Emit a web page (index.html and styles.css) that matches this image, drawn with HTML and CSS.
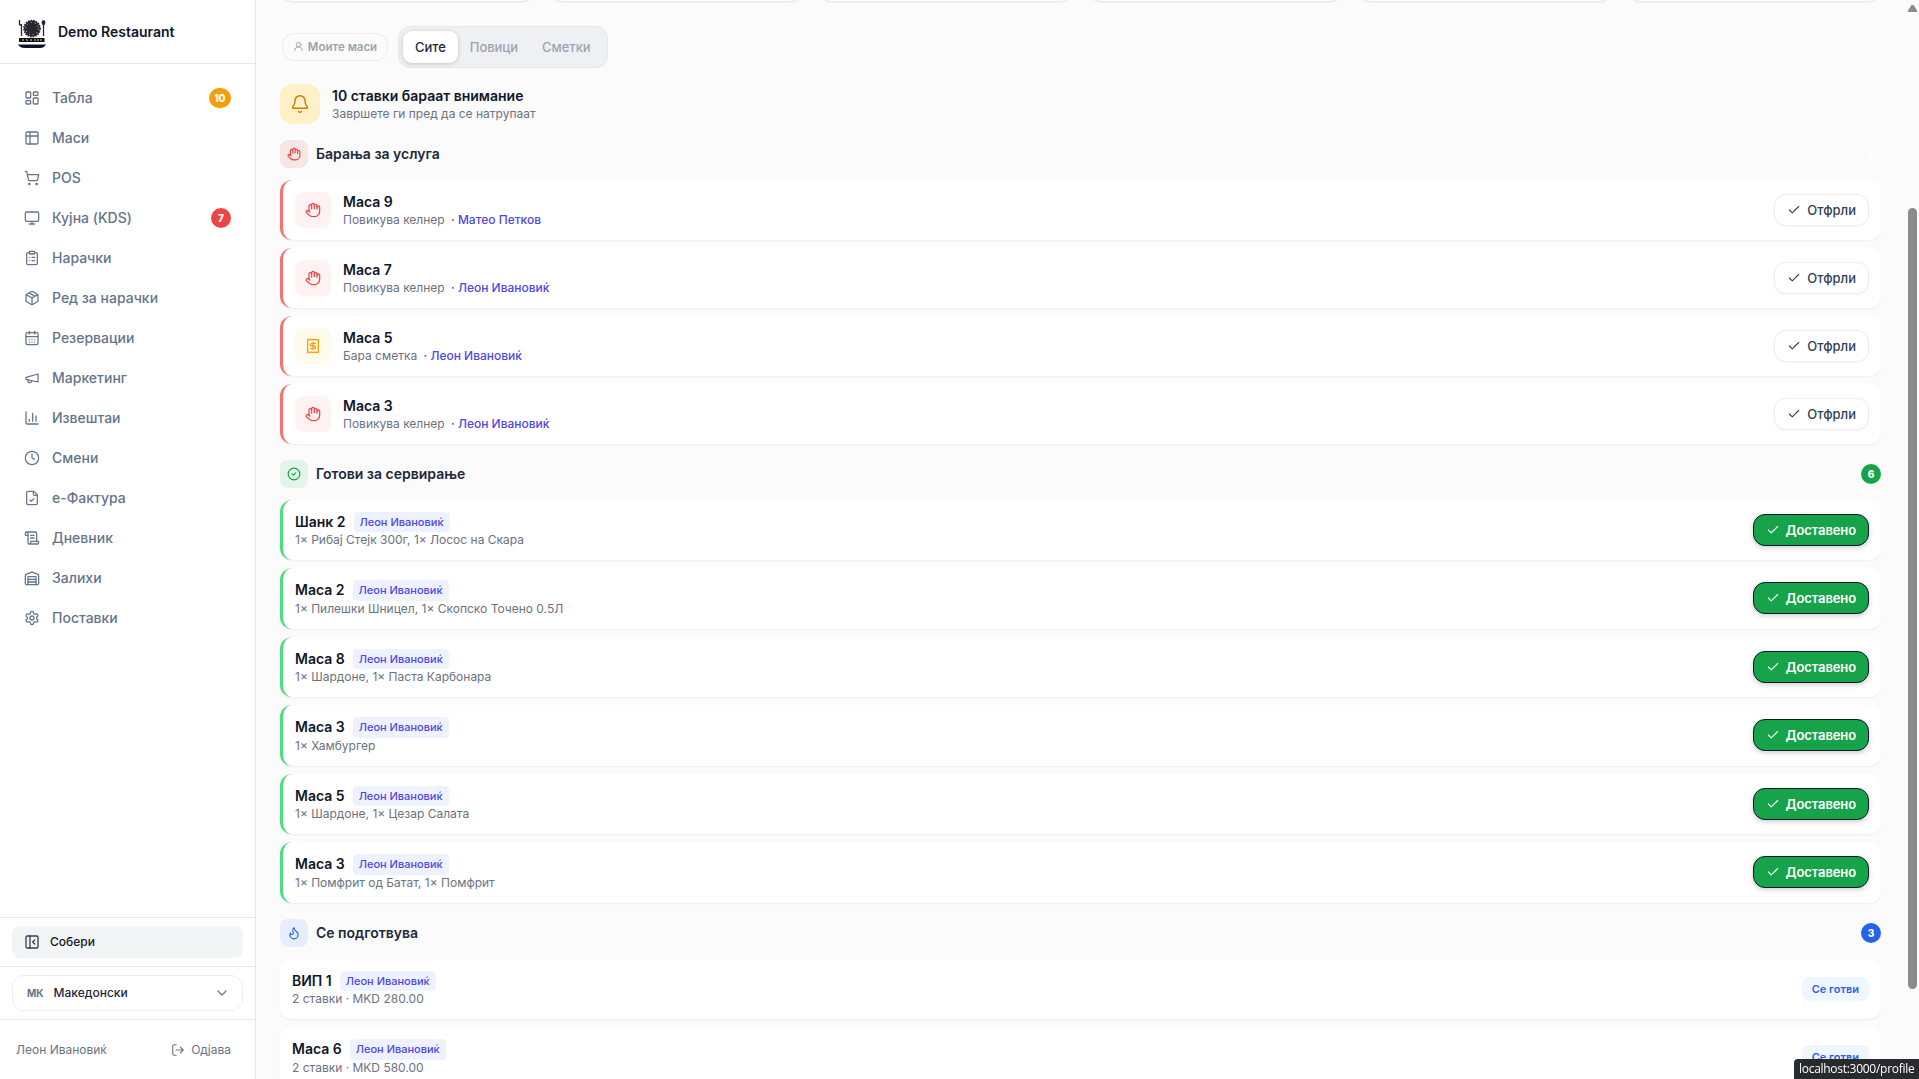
FILE: index.html
```html
<!DOCTYPE html>
<html lang="mk">
<head>
<meta charset="utf-8">
<title>Demo Restaurant</title>
<link rel="stylesheet" href="styles.css">
</head>
<body>
<svg class="sprite" aria-hidden="true">
  <symbol id="i-dash" viewBox="0 0 24 24"><rect x="3" y="3" width="7" height="9" rx="1"/><rect x="14" y="3" width="7" height="5" rx="1"/><rect x="14" y="12" width="7" height="9" rx="1"/><rect x="3" y="16" width="7" height="5" rx="1"/></symbol>
  <symbol id="i-table" viewBox="0 0 24 24"><rect x="3" y="3" width="18" height="18" rx="2"/><path d="M3 9h18M9 3v18"/></symbol>
  <symbol id="i-cart" viewBox="0 0 24 24"><circle cx="8" cy="21" r="1"/><circle cx="19" cy="21" r="1"/><path d="M2.05 2.05h2l2.66 12.42a2 2 0 0 0 2 1.58h9.78a2 2 0 0 0 1.95-1.57l1.65-7.43H5.12"/></symbol>
  <symbol id="i-monitor" viewBox="0 0 24 24"><rect x="2" y="3" width="20" height="14" rx="2"/><path d="M8 21h8M12 17v4"/></symbol>
  <symbol id="i-clip" viewBox="0 0 24 24"><rect x="8" y="2" width="8" height="4" rx="1"/><path d="M16 4h2a2 2 0 0 1 2 2v14a2 2 0 0 1-2 2H6a2 2 0 0 1-2-2V6a2 2 0 0 1 2-2h2M12 11h4M12 16h4M8 11h.01M8 16h.01"/></symbol>
  <symbol id="i-box" viewBox="0 0 24 24"><path d="M11 21.73a2 2 0 0 0 2 0l7-4A2 2 0 0 0 21 16V8a2 2 0 0 0-1-1.73l-7-4a2 2 0 0 0-2 0l-7 4A2 2 0 0 0 3 8v8a2 2 0 0 0 1 1.73zM12 22V12M3.29 7 12 12l8.71-5M7.5 4.27l9 5.15"/></symbol>
  <symbol id="i-cal" viewBox="0 0 24 24"><path d="M8 2v4M16 2v4M3 10h18M8 14h.01M12 14h.01M16 14h.01M8 18h.01M12 18h.01M16 18h.01"/><rect x="3" y="4" width="18" height="18" rx="2"/></symbol>
  <symbol id="i-mega" viewBox="0 0 24 24"><path d="m3 11 18-5v12L3 14v-3zM11.6 16.8a3 3 0 1 1-5.8-1.6"/></symbol>
  <symbol id="i-chart" viewBox="0 0 24 24"><path d="M3 3v16a2 2 0 0 0 2 2h16M18 17V9M13 17V5M8 17v-3"/></symbol>
  <symbol id="i-clock" viewBox="0 0 24 24"><circle cx="12" cy="12" r="10"/><path d="M12 6v6l4 2"/></symbol>
  <symbol id="i-file" viewBox="0 0 24 24"><path d="M15 2H6a2 2 0 0 0-2 2v16a2 2 0 0 0 2 2h12a2 2 0 0 0 2-2V7zM14 2v4a2 2 0 0 0 2 2h4M9 15l2 2 4-4"/></symbol>
  <symbol id="i-scroll" viewBox="0 0 24 24"><path d="M15 12h-5M15 8h-5M19 17V5a2 2 0 0 0-2-2H4M8 21h12a2 2 0 0 0 2-2v-1a1 1 0 0 0-1-1H11a1 1 0 0 0-1 1v1a2 2 0 1 1-4 0V5a2 2 0 1 0-4 0v2a1 1 0 0 0 1 1h3"/></symbol>
  <symbol id="i-ware" viewBox="0 0 24 24"><path d="M22 8.35V20a2 2 0 0 1-2 2H4a2 2 0 0 1-2-2V8.35A2 2 0 0 1 3.26 6.5l8-3.2a2 2 0 0 1 1.48 0l8 3.2A2 2 0 0 1 22 8.35ZM6 18h12M6 14h12"/><path d="M6 22V11a1 1 0 0 1 1-1h10a1 1 0 0 1 1 1v11"/></symbol>
  <symbol id="i-gear" viewBox="0 0 24 24"><path d="M12.22 2h-.44a2 2 0 0 0-2 2v.18a2 2 0 0 1-1 1.73l-.43.25a2 2 0 0 1-2 0l-.15-.08a2 2 0 0 0-2.73.73l-.22.38a2 2 0 0 0 .73 2.73l.15.1a2 2 0 0 1 1 1.72v.51a2 2 0 0 1-1 1.74l-.15.09a2 2 0 0 0-.73 2.73l.22.38a2 2 0 0 0 2.73.73l.15-.08a2 2 0 0 1 2 0l.43.25a2 2 0 0 1 1 1.73V20a2 2 0 0 0 2 2h.44a2 2 0 0 0 2-2v-.18a2 2 0 0 1 1-1.73l.43-.25a2 2 0 0 1 2 0l.15.08a2 2 0 0 0 2.73-.73l.22-.39a2 2 0 0 0-.73-2.73l-.15-.08a2 2 0 0 1-1-1.74v-.5a2 2 0 0 1 1-1.74l.15-.09a2 2 0 0 0 .73-2.73l-.22-.38a2 2 0 0 0-2.73-.73l-.15.08a2 2 0 0 1-2 0l-.43-.25a2 2 0 0 1-1-1.73V4a2 2 0 0 0-2-2z"/><circle cx="12" cy="12" r="3"/></symbol>
  <symbol id="i-collapse" viewBox="0 0 24 24"><rect x="3" y="3" width="18" height="18" rx="2"/><path d="M9 3v18M16 15l-3-3 3-3"/></symbol>
  <symbol id="i-down" viewBox="0 0 24 24"><path d="m6 9 6 6 6-6"/></symbol>
  <symbol id="i-logout" viewBox="0 0 24 24"><path d="M9 21H5a2 2 0 0 1-2-2V5a2 2 0 0 1 2-2h4M16 17l5-5-5-5M21 12H9"/></symbol>
  <symbol id="i-user" viewBox="0 0 24 24"><circle cx="12" cy="8" r="5"/><path d="M20 21a8 8 0 0 0-16 0"/></symbol>
  <symbol id="i-bell" viewBox="0 0 24 24"><path d="M10.27 21a2 2 0 0 0 3.46 0M3.26 15.33A1 1 0 0 0 4 17h16a1 1 0 0 0 .74-1.67C19.41 13.96 18 12.5 18 8A6 6 0 0 0 6 8c0 4.5-1.41 5.96-2.74 7.33"/></symbol>
  <symbol id="i-hand" viewBox="0 0 24 24"><path d="M18 11V6a2 2 0 0 0-4 0M14 10V4a2 2 0 0 0-4 0v2M10 10.5V6a2 2 0 0 0-4 0v8"/><path d="M18 8a2 2 0 1 1 4 0v6a8 8 0 0 1-8 8h-2c-2.8 0-4.5-.86-5.99-2.34l-3.6-3.6a2 2 0 0 1 2.83-2.82L7 15"/></symbol>
  <symbol id="i-receipt" viewBox="0 0 24 24"><path d="M4 2v20l2-1 2 1 2-1 2 1 2-1 2 1 2-1 2 1V2l-2 1-2-1-2 1-2-1-2 1-2-1-2 1Z"/><path d="M16 8h-6a2 2 0 1 0 0 4h4a2 2 0 1 1 0 4H8M12 17.5v-11"/></symbol>
  <symbol id="i-okc" viewBox="0 0 24 24"><circle cx="12" cy="12" r="10"/><path d="m9 12 2 2 4-4"/></symbol>
  <symbol id="i-flame" viewBox="0 0 24 24"><path d="M8.5 14.5A2.5 2.5 0 0 0 11 12c0-1.38-.5-2-1-3-1.07-2.14-.22-4.05 2-6 .5 2.5 2 4.9 4 6.5s3 3.5 3 5.5a7 7 0 1 1-14 0c0-1.15.43-2.29 1-3a2.5 2.5 0 0 0 2.5 2.5"/></symbol>
  <symbol id="i-check" viewBox="0 0 24 24"><path d="M20 6 9 17l-5-5"/></symbol>
</svg>

<div class="app">
  <aside class="sidebar">
    <div class="brand">
      <svg class="logo" viewBox="0 0 28 30">
        <circle cx="14" cy="9.6" r="8" fill="#26272f"/>
        <circle cx="14" cy="9.6" r="8.1" fill="none" stroke="#26272f" stroke-width="1.5" stroke-dasharray="1.6 1"/>
        <circle cx="14" cy="9.6" r="6.2" fill="none" stroke="#fff" stroke-width=".8" stroke-dasharray=".9 3"/>
        <path d="M1.5 1v5M3.5 5v12M1.5 6h2M25.5 4v13" fill="none" stroke="#26272f" stroke-width="1.3"/>
        <ellipse cx="25.5" cy="3.6" rx="1.9" ry="2.6" fill="#26272f"/>
        <path d="M1 19h25.500v4H1z" fill="#111"/>
        <path d="M5 20v2M8 20.500l2 1M13 20v2M16 21h2M20 20v2M23 20v2" stroke="#fff" stroke-width=".8"/>
        <path d="M0 25.500h28q-2 3.500-6 3.500H7q-5 0-7-3.500z" fill="#0d1424"/>
      </svg>
      <span>Demo Restaurant</span>
    </div>
    <nav class="nav">
      <a><svg class="ic"><use href="#i-dash"/></svg><span>Табла</span><b class="pill amber">10</b></a>
      <a><svg class="ic"><use href="#i-table"/></svg><span>Маси</span></a>
      <a><svg class="ic"><use href="#i-cart"/></svg><span>POS</span></a>
      <a><svg class="ic"><use href="#i-monitor"/></svg><span>Кујна (KDS)</span><b class="pill red">7</b></a>
      <a><svg class="ic"><use href="#i-clip"/></svg><span>Нарачки</span></a>
      <a><svg class="ic"><use href="#i-box"/></svg><span>Ред за нарачки</span></a>
      <a><svg class="ic"><use href="#i-cal"/></svg><span>Резервации</span></a>
      <a><svg class="ic"><use href="#i-mega"/></svg><span>Маркетинг</span></a>
      <a><svg class="ic"><use href="#i-chart"/></svg><span>Извештаи</span></a>
      <a><svg class="ic"><use href="#i-clock"/></svg><span>Смени</span></a>
      <a><svg class="ic"><use href="#i-file"/></svg><span>е-Фактура</span></a>
      <a><svg class="ic"><use href="#i-scroll"/></svg><span>Дневник</span></a>
      <a><svg class="ic"><use href="#i-ware"/></svg><span>Залихи</span></a>
      <a><svg class="ic"><use href="#i-gear"/></svg><span>Поставки</span></a>
    </nav>
    <div class="side-block collapse"><button class="collapse-btn"><svg class="ic"><use href="#i-collapse"/></svg><span>Собери</span></button></div>
    <div class="side-block lang"><button class="lang-btn"><b>МК</b><span>Македонски</span><svg class="ic"><use href="#i-down"/></svg></button></div>
    <div class="side-block user"><span>Леон Ивановиќ</span><a class="logout"><svg class="ic"><use href="#i-logout"/></svg><span>Одјава</span></a></div>
  </aside>

  <main class="main">
    <div class="stats"><i></i><i></i><i></i><i></i><i></i><i></i></div>
    <div class="filters">
      <button class="mine"><svg class="ic"><use href="#i-user"/></svg><span>Моите маси</span></button>
      <div class="tabs"><button class="tab on">Сите</button><button class="tab">Повици</button><button class="tab">Сметки</button></div>
    </div>
    <div class="alert">
      <div class="alert-ic"><svg class="ic"><use href="#i-bell"/></svg></div>
      <div><div class="title">10 ставки бараат внимание</div><div class="sub">Завршете ги пред да се натрупаат</div></div>
    </div>

    <section>
      <h2 class="head h-red"><span class="head-ic"><svg class="ic"><use href="#i-hand"/></svg></span><span>Барања за услуга</span><b class="count">4</b></h2>
      <div class="list">
        <div class="card c-red"><div class="box"><svg class="ic"><use href="#i-hand"/></svg></div><div class="info"><div class="title">Маса 9</div><div class="sub">Повикува келнер <em>· Матео Петков</em></div></div><button class="btn"><svg class="ic"><use href="#i-check"/></svg>Отфрли</button></div>
        <div class="card c-red"><div class="box"><svg class="ic"><use href="#i-hand"/></svg></div><div class="info"><div class="title">Маса 7</div><div class="sub">Повикува келнер <em>· Леон Ивановиќ</em></div></div><button class="btn"><svg class="ic"><use href="#i-check"/></svg>Отфрли</button></div>
        <div class="card c-red"><div class="box bill"><svg class="ic"><use href="#i-receipt"/></svg></div><div class="info"><div class="title">Маса 5</div><div class="sub">Бара сметка <em>· Леон Ивановиќ</em></div></div><button class="btn"><svg class="ic"><use href="#i-check"/></svg>Отфрли</button></div>
        <div class="card c-red"><div class="box"><svg class="ic"><use href="#i-hand"/></svg></div><div class="info"><div class="title">Маса 3</div><div class="sub">Повикува келнер <em>· Леон Ивановиќ</em></div></div><button class="btn"><svg class="ic"><use href="#i-check"/></svg>Отфрли</button></div>
      </div>
    </section>

    <section>
      <h2 class="head h-green"><span class="head-ic"><svg class="ic"><use href="#i-okc"/></svg></span><span>Готови за сервирање</span><b class="count">6</b></h2>
      <div class="list">
        <div class="card c-green"><div class="info"><div class="row"><span class="title">Шанк 2</span><span class="tag">Леон Ивановиќ</span></div><div class="sub">1× Рибај Стејк 300г, 1× Лосос на Скара</div></div><button class="btn go"><svg class="ic"><use href="#i-check"/></svg>Доставено</button></div>
        <div class="card c-green"><div class="info"><div class="row"><span class="title">Маса 2</span><span class="tag">Леон Ивановиќ</span></div><div class="sub">1× Пилешки Шницел, 1× Скопско Точено 0.5Л</div></div><button class="btn go"><svg class="ic"><use href="#i-check"/></svg>Доставено</button></div>
        <div class="card c-green"><div class="info"><div class="row"><span class="title">Маса 8</span><span class="tag">Леон Ивановиќ</span></div><div class="sub">1× Шардоне, 1× Паста Карбонара</div></div><button class="btn go"><svg class="ic"><use href="#i-check"/></svg>Доставено</button></div>
        <div class="card c-green"><div class="info"><div class="row"><span class="title">Маса 3</span><span class="tag">Леон Ивановиќ</span></div><div class="sub">1× Хамбургер</div></div><button class="btn go"><svg class="ic"><use href="#i-check"/></svg>Доставено</button></div>
        <div class="card c-green"><div class="info"><div class="row"><span class="title">Маса 5</span><span class="tag">Леон Ивановиќ</span></div><div class="sub">1× Шардоне, 1× Цезар Салата</div></div><button class="btn go"><svg class="ic"><use href="#i-check"/></svg>Доставено</button></div>
        <div class="card c-green"><div class="info"><div class="row"><span class="title">Маса 3</span><span class="tag">Леон Ивановиќ</span></div><div class="sub">1× Помфрит од Батат, 1× Помфрит</div></div><button class="btn go"><svg class="ic"><use href="#i-check"/></svg>Доставено</button></div>
      </div>
    </section>

    <section>
      <h2 class="head h-blue"><span class="head-ic"><svg class="ic"><use href="#i-flame"/></svg></span><span>Се подготвува</span><b class="count">3</b></h2>
      <div class="list">
        <div class="card"><div class="info"><div class="row"><span class="title">ВИП 1</span><span class="tag">Леон Ивановиќ</span></div><div class="sub">2 ставки · MKD 280.00</div></div><span class="state">Се готви</span></div>
        <div class="card"><div class="info"><div class="row"><span class="title">Маса 6</span><span class="tag">Леон Ивановиќ</span></div><div class="sub">2 ставки · MKD 580.00</div></div><span class="state">Се готви</span></div>
      </div>
    </section>
  </main>
  <div class="scroll"><i class="arrow"></i><i class="thumb"></i></div>
</div>
<div class="status">localhost:3000/profile</div>
</body>
</html>
```
FILE: styles.css
```css
* { box-sizing: border-box; }
body { margin: 0; height: 100vh; overflow: hidden; background: #fbfbfb; color: #0f172a; font-family: Inter, "Noto Sans", sans-serif; font-size: 14px; line-height: 20px; }
button { font: inherit; color: inherit; background: none; border: 0; margin: 0; padding: 0; }
.sprite { position: absolute; width: 0; height: 0; }
.ic { width: 16px; height: 16px; flex: none; fill: none; stroke: currentColor; stroke-width: 1.9; stroke-linecap: round; stroke-linejoin: round; }

.app { display: flex; height: 100vh; overflow: hidden; }
.sidebar { width: 256px; flex: none; display: flex; flex-direction: column; background: #fff; border-right: 1px solid #e5e7eb; }
.brand { height: 64px; flex: none; display: flex; align-items: center; gap: 12px; padding: 0 18px; border-bottom: 1px solid #e5e7eb; font-weight: 600; }
.logo { width: 28px; height: 30px; margin-top: 4px; }
.nav { flex: 1; display: flex; flex-direction: column; gap: 4px; padding: 16px 12px; color: #64748b; font-weight: 500; }
.nav a { height: 36px; display: flex; align-items: center; gap: 12px; padding: 0 12px; }
.pill { margin-left: auto; min-width: 20px; height: 20px; padding: 0 5.5px; border-radius: 10px; color: #fff; font-size: 10px; font-weight: 800; text-align: center; }
.amber { background: #f59e0b; }
.red { background: #ef4444; }
.side-block { flex: none; border-top: 1px solid #e5e7eb; padding: 8px 12px; }
.collapse-btn { width: 100%; height: 32px; display: flex; align-items: center; gap: 10px; padding: 0 12px; border-radius: 8px; background: #f3f4f6; font-size: 12px; font-weight: 450; }
.collapse-btn .ic { color: #334155; stroke-width: 2; }
.lang-btn { width: 100%; height: 36px; display: flex; align-items: center; gap: 10px; padding: 0 12px 0 14px; border: 1px solid #eceef1; border-radius: 12px; font-size: 12px; font-weight: 450; color: #1e293b; }
.lang-btn b { font-size: 10px; font-weight: 700; color: #64748b; }
.lang-btn .ic { margin-left: auto; color: #777; }
.user { height: 60px; display: flex; align-items: center; justify-content: space-between; padding: 0 24px 0 16px; color: #6b7280; font-size: 12px; }
.logout { display: flex; align-items: center; gap: 6px; color: #64748b; }
.logout .ic { width: 14px; height: 14px; }

.main { flex: 1; padding: 0 26px 0 24px; min-width: 0; }
.stats { display: grid; grid-template-columns: repeat(6, 1fr); gap: 16px; height: 2px; }
.stats i { height: 40px; margin-top: -38px; background: #fff; border: 1px solid #e3e5e8; border-radius: 12px; box-shadow: 0 1px 2px rgba(0,0,0,.04); }
.filters { display: flex; align-items: center; gap: 10px; margin: 23.7px 0 16px; padding-left: 2px; height: 42px; }
.mine { height: 28px; width: 106px; display: flex; align-items: center; justify-content: center; gap: 4px; border: 1px solid #ededf0; border-radius: 12px; color: #9ca3af; font-size: 11.5px; font-weight: 600; }
.mine .ic { width: 11px; height: 11px; stroke-width: 2; }
.tabs { display: flex; width: 210px; height: 42px; padding: 4px; background: #eff0f4; border: 1px solid #e5e7eb; border-radius: 12px; }
.tab { padding: 0 12px; height: 32px; border-radius: 9px; font-size: 13px; font-weight: 550; letter-spacing: -.05px; color: #9ca3af; }
.on { background: #fff; color: #1e293b; box-shadow: 0 1px 4px rgba(15,23,42,.2); }
.alert { display: flex; align-items: center; gap: 12px; height: 40px; margin-bottom: 16px; }
.alert-ic { width: 40px; height: 40px; display: grid; place-items: center; border-radius: 12px; background: #fef1c7; color: #d97706; }
.alert-ic .ic { width: 20px; height: 20px; stroke-width: 1.75; }
.title { font-size: 14px; font-weight: 600; line-height: 20px; }
.sub { font-size: 12px; line-height: 16px; color: #6b7280; white-space: pre; }
.sub em { font-style: normal; font-weight: 500; color: #4f46e5; margin-left: 3px; }

section { margin-bottom: 16px; }
.head { display: flex; align-items: center; gap: 8px; height: 28px; margin: 0 0 12px; font-size: 14px; font-weight: 600; color: #1e293b; }
.head-ic { width: 28px; height: 28px; display: grid; place-items: center; border-radius: 8px; }
.head-ic .ic { width: 14px; height: 14px; stroke-width: 2; }
.count { margin-left: auto; width: 20px; height: 20px; border-radius: 50%; color: #fff; font-size: 10px; font-weight: 800; text-align: center; }
.h-red .head-ic { background: #f7e6e6; color: #ef4444; }
.h-green .head-ic { background: #e3f5ea; color: #16a34a; }
.h-green .count { background: #16a34a; }
.h-blue .head-ic { background: #e6eefc; color: #2563eb; }
.h-blue .count { background: #2563eb; }
.list { display: flex; flex-direction: column; gap: 8px; }
.card { display: flex; align-items: center; gap: 12px; padding: 12px; background: #fff; border-radius: 12px; box-shadow: 0 1px 2px rgba(0,0,0,.06); }
.c-red { border-left: 3px solid #f87171; }
.c-green { border-left: 3px solid #4ade80; }
.box { width: 36px; height: 36px; display: grid; place-items: center; border-radius: 8px; background: #fef2f2; color: #ef4444; }
.bill { background: #fffbeb; color: #f59e0b; }
.info { flex: 1; min-width: 0; }
.row { display: flex; align-items: center; gap: 8px; }
.tag { padding: 2px 6px; border-radius: 4px; background: #eef2ff; color: #4f46e5; font-size: 11px; line-height: 16.5px; font-weight: 500; }
.btn { height: 32px; display: flex; align-items: center; gap: 6px; padding: 0 12px; border: 1px solid #ebedf0; border-radius: 12px; background: #fff; color: #334155; font-size: 13px; font-weight: 500; box-shadow: 0 1px 2px rgba(0,0,0,.05); }
.btn .ic { width: 14px; height: 14px; }
.go { background: #16a34a; border-color: #0f172a; color: #fff; font-weight: 600; letter-spacing: -.1px; box-shadow: 0 2px 5px rgba(15,23,42,.2); }
.state { height: 24px; padding: 0 10px; border-radius: 8px; background: #eff6ff; color: #2563eb; font-size: 11px; font-weight: 600; line-height: 24px; }

.scroll { width: 12px; flex: none; display: flex; flex-direction: column; padding: 5px 0 0 1px; }
.arrow { width: 9px; height: 7px; background: #8b8b8b; clip-path: polygon(38% 0, 62% 0, 100% 80%, 100% 100%, 0 100%, 0 80%); }
.thumb { width: 9px; height: 781px; margin-top: 196px; border-radius: 5px; background: #8b8b8b; }
.status { position: fixed; right: 0; bottom: 0; width: 125px; height: 20px; padding-left: 5px; border-radius: 4px 0 0 0; background: #292a2d; color: #fff; font: 12px/20px "Open Sans", "Noto Sans", sans-serif; letter-spacing: -.28px; white-space: nowrap; }
```
